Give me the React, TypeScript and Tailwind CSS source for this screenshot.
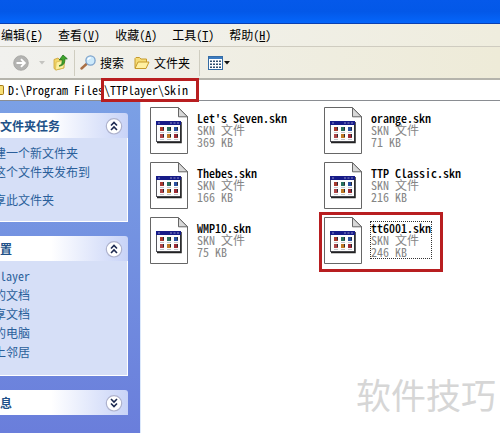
import type { ReactNode } from "react";

const MENUS = [
  { label: "编辑", key: "E" },
  { label: "查看", key: "V" },
  { label: "收藏", key: "A" },
  { label: "工具", key: "T" },
  { label: "帮助", key: "H" },
];

const FILES = [
  { name: "Let's Seven.skn", size: "369 KB" },
  { name: "orange.skn", size: "71 KB" },
  { name: "Thebes.skn", size: "166 KB" },
  { name: "TTP Classic.skn", size: "216 KB" },
  { name: "WMP10.skn", size: "75 KB" },
  { name: "tt6001.skn", size: "246 KB", selected: true },
];

function ForwardIcon() {
  return (
    <svg width="16" height="16" viewBox="0 0 16 16" aria-hidden="true">
      <circle cx="8" cy="8" r="7.3" fill="#b3b3b1" stroke="#a2a2a0" strokeWidth="0.8" />
      <path d="M3.5 8h8M8 4.2 11.8 8 8 11.8" fill="none" stroke="#fff" strokeWidth="1.9" />
    </svg>
  );
}

function UpFolderIcon() {
  return (
    <svg width="15" height="17" viewBox="0 0 15 17" aria-hidden="true">
      <path d="M1 5.5 5 4l1.500 1.500L11 4.500V14l-8 2L1 14.500Z" fill="#f3d56a" stroke="#c9a132" strokeWidth="0.8" />
      <path d="M3.200 8 12 6l-1.500 8L2.500 16Z" fill="#fdf0a0" stroke="#d0ac3d" strokeWidth="0.6" />
      <path d="M6 12c3-1 3.500-3 3-6.500L6.300 6 10 1l4.300 3.800-2.600.3C12 9 10.500 12 6 12Z" fill="#3fa52c" stroke="#20741a" strokeWidth="0.8" />
    </svg>
  );
}

function SearchIcon() {
  return (
    <svg width="17" height="16" viewBox="0 0 17 16" aria-hidden="true">
      <path d="M1.500 13.500 6.500 9" stroke="#a96f45" strokeWidth="2.400" strokeLinecap="round" />
      <circle cx="10.500" cy="5.500" r="4.600" fill="#cdeafb" stroke="#7da3cc" strokeWidth="1.300" />
      <path d="M7.800 5c.3-1.500 1.500-2.300 3-2.200" fill="none" stroke="#fff" strokeWidth="1.200" />
    </svg>
  );
}

function FolderIcon() {
  return (
    <svg width="16" height="14" viewBox="0 0 16 14" aria-hidden="true">
      <path d="M1 12V2.500L2 1.500h3.500L7 3h5.500v3" fill="#f6dc76" stroke="#c69a2c" />
      <path d="M1 12.500 4 6h11l-3 6.500Z" fill="#fff0a2" stroke="#c69a2c" strokeLinejoin="round" />
    </svg>
  );
}

function ViewsIcon() {
  return (
    <svg width="15" height="14" viewBox="0 0 15 14" aria-hidden="true">
      <rect x="0.500" y="0.500" width="14" height="13" fill="#fff" stroke="#356ca5" />
      <rect x="1" y="1" width="13" height="2" fill="#3d7cc0" />
      {[5, 8, 11].map((y) =>
        [2, 5, 8, 11].map((x) => (
          <rect key={`${x}-${y}`} x={x} y={y - 0.5} width="2" height="1.500" fill="#2f4f70" />
        )),
      )}
    </svg>
  );
}

function Caret({ color }: { color: string }) {
  return (
    <svg width="6" height="4" viewBox="0 0 6 4" aria-hidden="true">
      <path d="M0 0h6L3 3.500Z" fill={color} />
    </svg>
  );
}

function SkinFileIcon() {
  const dots = ["#a8382d", "#28705f", "#294f9f", "#b04648", "#c07a25", "#a02b35"];
  return (
    <svg className="shrink-0" width="39" height="48" viewBox="0 0 39 48" aria-hidden="true">
      <path d="M.5.5h28l9 9v37H.5Z" fill="#fff" stroke="#666" />
      <path d="M28.500.8v9h9Z" fill="#d8d8d8" stroke="#666" strokeLinejoin="round" />
      <rect x="6.500" y="14.500" width="24" height="20" fill="#fdfdfd" stroke="#55555c" />
      <path d="M31 15v20.500H7" fill="none" stroke="#222" strokeWidth="1.500" />
      <rect x="6" y="14" width="25" height="4" fill="#161b88" />
      <path d="M8 16h2M20 16h2M23.500 16h2M27 16h2" stroke="#8f8fc4" />
      {dots.map((fill, i) => (
        <g key={i} transform={`translate(${10 + (i % 3) * 7} ${20 + Math.floor(i / 3) * 7})`}>
          <rect width="4" height="4" fill={fill} />
          <path d="M3 0h1v3h-1Z" fill="#2a2a35" />
          <path d="M0 5.500h4" stroke="#c4c4ca" />
        </g>
      ))}
    </svg>
  );
}

function Chevrons({ down }: { down?: boolean }) {
  return (
    <svg width="18" height="18" viewBox="0 0 18 18" aria-hidden="true">
      <circle cx="9" cy="9.300" r="7.700" fill="#fff" stroke="#aeb2cd" strokeWidth="1.200" />
      <path
        d={down ? "M6 5l3 3 3-3M6 9.500l3 3 3-3" : "M6 8.500l3-3 3 3M6 13l3-3 3 3"}
        fill="none"
        stroke="#1d2a50"
        strokeWidth="1.600"
      />
    </svg>
  );
}

function Panel({ title, collapsed, children }: { title: string; collapsed?: boolean; children?: ReactNode }) {
  return (
    <section>
      <h2 className="flex h-[25px] items-center justify-between rounded-tr-[3px] bg-linear-to-r from-white from-40% to-[#c8d3f7] pr-[5px] font-bold text-[#215188]">
        {title}
        <button type="button" aria-label={`${collapsed ? "展开" : "折叠"}${title}`}>
          <Chevrons down={collapsed} />
        </button>
      </h2>
      {children && (
        <ul className="border-r border-b border-white bg-[#d6dff7] pt-[5px] leading-[19px] text-[#2b5f9b]">
          {children}
        </ul>
      )}
    </section>
  );
}

function TaskLink({ children }: { children: string }) {
  return (
    <li className="-ml-[6px] whitespace-nowrap">
      <a href="#">{children}</a>
    </li>
  );
}

export default function App() {
  return (
    <div className="flex min-h-screen flex-col overflow-hidden bg-white font-['Noto_Sans_CJK_SC',sans-serif] text-xs text-black [font-feature-settings:'hwid']">
      <header className="h-6 border-b border-[#0a3fb0] bg-linear-to-b from-[#0559ea] via-[#0358e8] to-[#0566fb]" />
      <nav className="flex h-[23px] items-center gap-[15px] border-b border-[#cfccc0] bg-linear-to-r from-[#f2f2f0] to-[#efedde] pl-px">
        {MENUS.map(({ label, key }) => (
          <button key={key} type="button" className="whitespace-nowrap">
            {label}(<span className="underline">{key}</span>)
          </button>
        ))}
      </nav>
      <div className="flex h-[33px] items-center border-b-2 border-[#b5b4ac] bg-linear-to-r from-[#f1f1ee] to-[#eeebd8] pl-[13px]">
        <button type="button" aria-label="前进" className="flex items-center gap-[10px]">
          <ForwardIcon />
          <Caret color="#c4c4c0" />
        </button>
        <button type="button" aria-label="向上" className="ml-2">
          <UpFolderIcon />
        </button>
        <span className="ml-[6px] h-[26px] w-px bg-[#cfcdc0]" />
        <button type="button" className="ml-[5px] flex items-center gap-[3px]">
          <SearchIcon />
          搜索
        </button>
        <button type="button" className="ml-[10px] flex items-center gap-1">
          <FolderIcon />
          文件夹
        </button>
        <span className="ml-[9px] h-[26px] w-px bg-[#cfcdc0]" />
        <button type="button" aria-label="查看方式" className="ml-2 flex items-center gap-px">
          <ViewsIcon />
          <Caret color="#111" />
        </button>
      </div>
      <div className="relative flex h-[21px] items-center border-b border-[#8a8d92]">
        <span className="h-[10px] w-1 rounded-r-xs border border-l-0 border-[#a57b18] bg-[#f8df75]" />
        <input
          aria-label="地址"
          className="ml-1 min-w-0 flex-1 outline-none"
          defaultValue={"D:\\Program Files\\TTPlayer\\Skin"}
        />
        <span className="pointer-events-none absolute -top-[2px] left-[101px] h-6 w-[98px] border-3 border-[#b81e20]" />
      </div>
      <div className="flex flex-1">
        <aside className="flex w-[140px] shrink-0 flex-col gap-[14px] overflow-hidden bg-linear-to-b from-[#7ba0e5] to-[#6a7edb] pt-3 pr-3">
          <Panel title="文件夹任务">
            <TaskLink>建一个新文件夹</TaskLink>
            <TaskLink>这个文件夹发布到</TaskLink>
            <li className="-ml-[6px] pt-[9px] pb-3 whitespace-nowrap">
              <a href="#">享此文件夹</a>
            </li>
          </Panel>
          <Panel title="置">
            <li>
              <a href="#">layer</a>
            </li>
            <TaskLink>的文档</TaskLink>
            <TaskLink>享文档</TaskLink>
            <TaskLink>的电脑</TaskLink>
            <TaskLink>上邻居</TaskLink>
            <li className="h-[14px]" />
          </Panel>
          <Panel title="息" collapsed />
        </aside>
        <main className="flex flex-1 flex-col justify-between border-l border-[#dbe8fb] pt-[6px] pl-[9px]">
          <div className="grid grid-cols-[repeat(auto-fill,174px)] gap-y-[7px]">
            {FILES.map((file) => (
              <button key={file.name} type="button" className="relative flex items-start gap-[7px] text-left leading-3">
                <SkinFileIcon />
                <span
                  className={`mt-1 flex flex-col border border-dotted whitespace-nowrap ${
                    file.selected ? "border-[#333]" : "border-transparent"
                  }`}
                >
                  <span className="font-medium">{file.name}</span>
                  <span className="text-[#858585]">SKN 文件</span>
                  <span className="text-[#858585]">{file.size}</span>
                </span>
                {file.selected && (
                  <span className="pointer-events-none absolute -top-[5px] -left-[5px] h-[60px] w-[124px] border-3 border-[#b81e20]" />
                )}
              </button>
            ))}
          </div>
          <p className="self-end pr-1 pb-[19px] text-[35px] leading-10 text-[#d6d6d6]">软件技巧</p>
        </main>
      </div>
    </div>
  );
}
